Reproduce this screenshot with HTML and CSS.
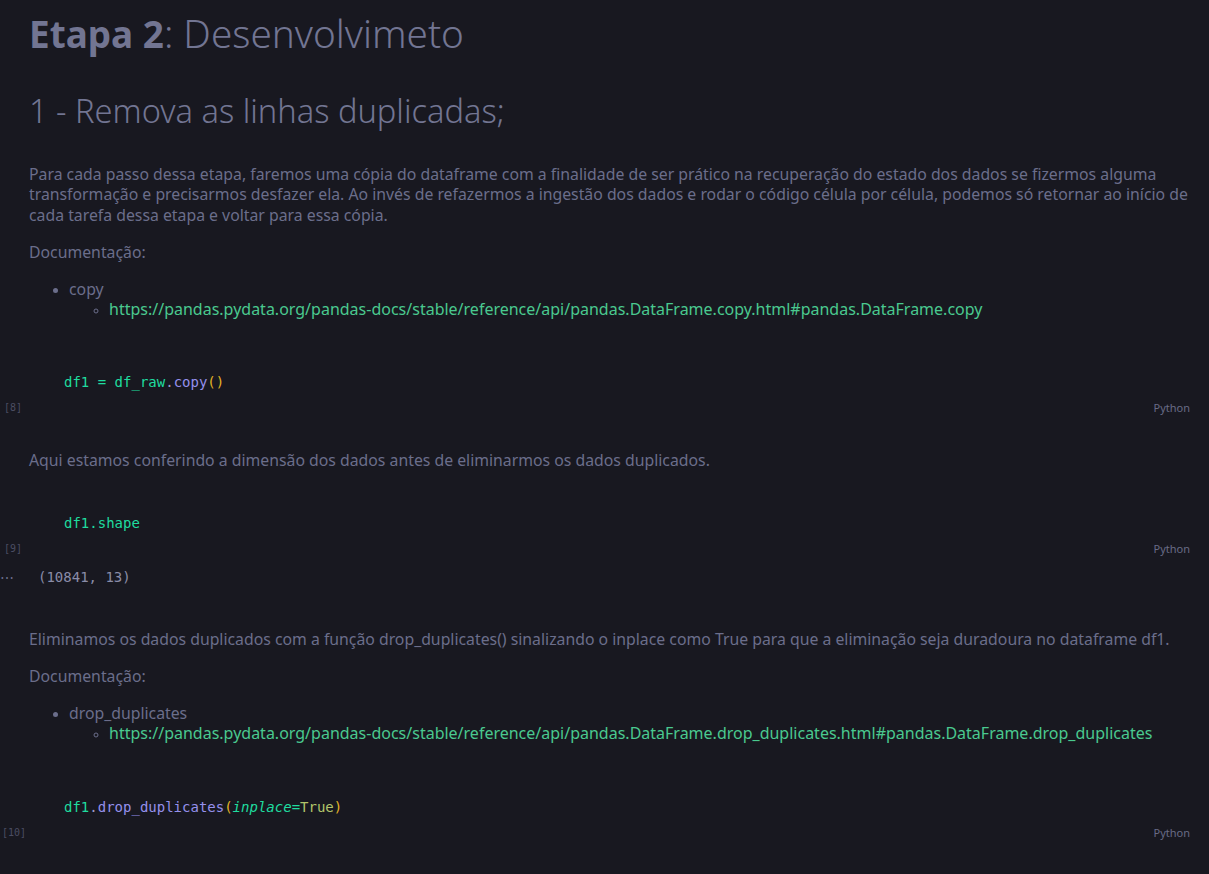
FILE: index.html
```html
<!DOCTYPE html>
<html lang="pt">
<head>
<meta charset="utf-8">
<title>Etapa 2</title>
<link rel="stylesheet" href="styles.css">
</head>
<body>
<main class="notebook">

  <section class="md-cell md-first">
    <h1 class="h1"><strong class="h1-strong">Etapa 2</strong>: Desenvolvimeto</h1>
    <h2 class="h2">1 - Remova as linhas duplicadas;</h2>
    <p class="p">Para cada passo dessa etapa, faremos uma cópia do dataframe com a finalidade de ser prático na recuperação do estado dos dados se fizermos alguma transformação e precisarmos desfazer ela. Ao invés de refazermos a ingestão dos dados e rodar o código célula por célula, podemos só retornar ao início de cada tarefa dessa etapa e voltar para essa cópia.</p>
    <p class="p">Documentação:</p>
    <ul class="ul">
      <li class="li">copy
        <ul class="ul2">
          <li class="li2"><a class="link" href="#">https://pandas.pydata.org/pandas-docs/stable/reference/api/pandas.DataFrame.copy.html#pandas.DataFrame.copy</a></li>
        </ul>
      </li>
    </ul>
  </section>

  <section class="code-cell">
    <div class="editor"><span class="v">df1</span> <span class="v">=</span> <span class="v">df_raw</span><span class="dot">.</span><span class="fn">copy</span><span class="par">()</span></div>
    <div class="cell-foot"><span class="exec">[8]</span><span class="lang">Python</span></div>
  </section>

  <section class="md-cell">
    <p class="p">Aqui estamos conferindo a dimensão dos dados antes de eliminarmos os dados duplicados.</p>
  </section>

  <section class="code-cell">
    <div class="editor"><span class="v">df1.shape</span></div>
    <div class="cell-foot"><span class="exec">[9]</span><span class="lang">Python</span></div>
    <div class="output"><span class="more">⋯</span><span class="out-text">(10841, 13)</span></div>
  </section>

  <section class="md-cell">
    <p class="p">Eliminamos os dados duplicados com a função drop_duplicates() sinalizando o inplace como True para que a eliminação seja duradoura no dataframe df1.</p>
    <p class="p">Documentação:</p>
    <ul class="ul">
      <li class="li">drop_duplicates
        <ul class="ul2">
          <li class="li2"><a class="link" href="#">https://pandas.pydata.org/pandas-docs/stable/reference/api/pandas.DataFrame.drop_duplicates.html#pandas.DataFrame.drop_duplicates</a></li>
        </ul>
      </li>
    </ul>
  </section>

  <section class="code-cell">
    <div class="editor"><span class="v">df1</span><span class="dot">.</span><span class="fn">drop_duplicates</span><span class="par">(</span><span class="kw">inplace</span><span class="v">=</span><span class="bool">True</span><span class="par">)</span></div>
    <div class="cell-foot"><span class="exec exec-wide">[10]</span><span class="lang">Python</span></div>
  </section>

</main>
</body>
</html>
```
FILE: styles.css
```css
html, body {
  margin: 0;
  padding: 0;
  background: #181820;
}

body {
  font-family: "Noto Sans", "Open Sans", sans-serif;
  color: #6b6e8b;
  overflow: hidden;
}

.notebook {
  display: flex;
  flex-direction: column;
}

/* ---------- markdown cells ---------- */
.md-cell {
  padding: 0 4px 0 29px;
}

.md-first {
  padding-top: 11px;
}

.h1 {
  margin: 0;
  font-size: 38.7px;
  line-height: 44px;
  font-weight: 300;
  color: #727592;
  white-space: nowrap;
}

.h1-strong {
  font-size: 36.9px;
  font-weight: 700;
}

.h2 {
  margin: 35px 0 0;
  font-size: 32.6px;
  line-height: 40px;
  font-weight: 300;
  color: #727592;
  white-space: nowrap;
}

.h2 + .p {
  margin-top: 32.75px;
}

.p {
  margin: 0 0 16.5px;
  font-size: 15.8px;
  line-height: 20.5px;
}

.p:last-child {
  margin-bottom: 0;
}

.ul {
  margin: 0 0 11.25px;
  padding-left: 40px;
  list-style: disc;
  font-size: 15.8px;
  line-height: 20px;
}

.li::marker {
  color: #6b6e8b;
  font-size: 13px;
}

.ul2 {
  margin: 0;
  padding-left: 40px;
  list-style: circle;
}

.li2::marker {
  color: #6b6e8b;
  font-size: 12px;
}

.link {
  font-size: 16px;
  color: #4ac98f;
  text-decoration: none;
  white-space: nowrap;
}

/* ---------- code cells ---------- */
.code-cell {
  display: flex;
  flex-direction: column;
  padding-top: 44.25px;
  padding-bottom: 34.75px;
}

.md-first + .code-cell {
  padding-top: 43.25px;
}

.editor {
  padding-left: 64px;
  font-family: "DejaVu Sans Mono", monospace;
  font-size: 14px;
  line-height: 19px;
  color: #1fdc9f;
  white-space: pre;
}

.v { color: #1fdc9f; }
.dot { color: #9c9cc8; }
.fn { color: #9590ec; }
.par { color: #e2b325; }
.kw { color: #1fdc9f; font-style: italic; }
.bool { color: #b2c46a; }

.cell-foot {
  display: flex;
  justify-content: space-between;
  align-items: center;
  margin-top: 8.5px;
  height: 14px;
  padding: 0 19px 0 4px;
}

.exec {
  font-family: "DejaVu Sans Mono", monospace;
  font-size: 10px;
  color: #4b4d62;
}

.exec-wide {
  margin-left: -2px;
}

.lang {
  font-family: "Noto Sans", sans-serif;
  font-size: 11px;
  color: #686b86;
}

.output {
  display: flex;
  align-items: center;
  margin-top: 12.5px;
  height: 19px;
  padding-bottom: 6.5px;
}

.more {
  width: 38px;
  font-size: 14px;
  color: #6b6e8b;
  line-height: 19px;
}

.out-text {
  font-family: "DejaVu Sans Mono", monospace;
  font-size: 14px;
  line-height: 19px;
  color: #8a8ca8;
  white-space: pre;
}
```
